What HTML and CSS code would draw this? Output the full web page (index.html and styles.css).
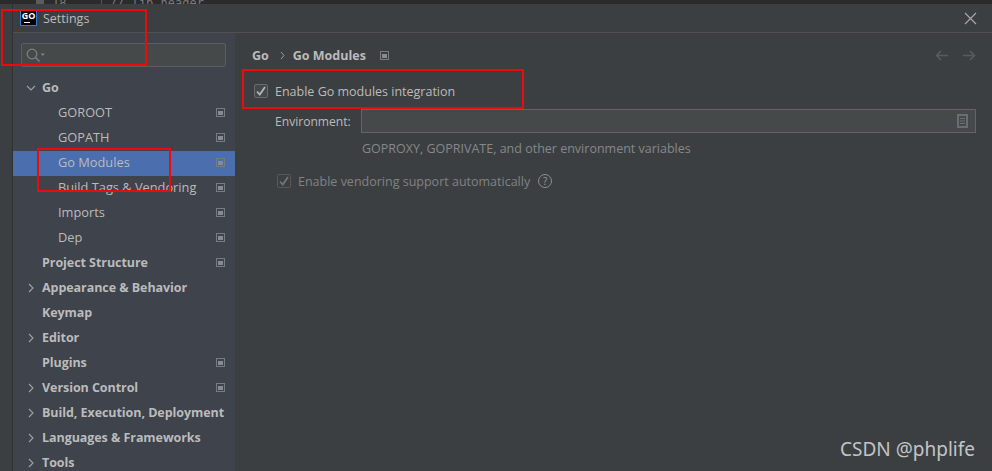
FILE: index.html
```html
<!DOCTYPE html>
<html lang="en">
<head>
    <meta charset="UTF-8">
    <title>Settings</title>
    <link rel="stylesheet" href="styles.css">
</head>
<body>
    <div class="editor-strip"><span class="gutter-mark"></span><span class="editor-line">18</span><span class="editor-code">// lib header</span></div>
    <div class="desktop">
        <div class="left-edge"></div>
        <div class="dialog">
            <header class="titlebar">
                <div class="app-logo"><span>GO</span><i></i></div>
                <span class="title">Settings</span>
                <svg class="close" width="13" height="13" viewBox="0 0 13 13"><path d="M1 1l11 11M12 1L1 12" stroke="#a9abad" stroke-width="1.1" fill="none"/></svg>
            </header>
            <div class="dialog-body">
                <aside class="sidebar">
                    <div class="search">
                        <svg width="22" height="16" viewBox="0 0 22 16"><circle cx="7" cy="7" r="4.8" stroke="#7d8183" stroke-width="1.2" fill="none"/><path d="M10.5 10.5l4 4" stroke="#7d8183" stroke-width="1.4"/><path d="M15.5 6.5h4.5l-2.2 2.6z" fill="#7d8183"/></svg>
                    </div>
                    <ul class="tree">
                        <li class="row group"><svg class="arrow" viewBox="0 0 10 10"><path d="M1 3l4 4 4-4"/></svg><span>Go</span></li>
                        <li class="row child"><span>GOROOT</span><i class="pin"></i></li>
                        <li class="row child"><span>GOPATH</span><i class="pin"></i></li>
                        <li class="row child selected"><span>Go Modules</span><i class="pin"></i></li>
                        <li class="row child"><span>Build Tags &amp; Vendoring</span><i class="pin"></i></li>
                        <li class="row child"><span>Imports</span><i class="pin"></i></li>
                        <li class="row child"><span>Dep</span><i class="pin"></i></li>
                        <li class="row group"><b class="no-arrow"></b><span>Project Structure</span><i class="pin"></i></li>
                        <li class="row group"><svg class="arrow" viewBox="0 0 10 10"><path d="M3 1l4 4-4 4"/></svg><span>Appearance &amp; Behavior</span></li>
                        <li class="row group"><b class="no-arrow"></b><span>Keymap</span></li>
                        <li class="row group"><svg class="arrow" viewBox="0 0 10 10"><path d="M3 1l4 4-4 4"/></svg><span>Editor</span></li>
                        <li class="row group"><b class="no-arrow"></b><span>Plugins</span><i class="pin"></i></li>
                        <li class="row group"><svg class="arrow" viewBox="0 0 10 10"><path d="M3 1l4 4-4 4"/></svg><span>Version Control</span><i class="pin"></i></li>
                        <li class="row group"><svg class="arrow" viewBox="0 0 10 10"><path d="M3 1l4 4-4 4"/></svg><span>Build, Execution, Deployment</span></li>
                        <li class="row group"><svg class="arrow" viewBox="0 0 10 10"><path d="M3 1l4 4-4 4"/></svg><span>Languages &amp; Frameworks</span></li>
                        <li class="row group"><svg class="arrow" viewBox="0 0 10 10"><path d="M3 1l4 4-4 4"/></svg><span>Tools</span></li>
                    </ul>
                </aside>
                <main class="content">
                    <div class="crumbs">
                        <strong>Go</strong>
                        <svg class="crumb-sep" width="5" height="9" viewBox="0 0 5 9"><path d="M1 1l3 3.5L1 8" stroke="#9a9c9e" fill="none"/></svg>
                        <strong>Go Modules</strong>
                        <i class="pin crumb-pin"></i>
                        <div class="nav-arrows">
                            <svg width="14" height="11" viewBox="0 0 14 11"><path d="M13 5.5H2M6 1L1.5 5.5 6 10" stroke="#585b5d" stroke-width="1.6" fill="none"/></svg>
                            <svg width="14" height="11" viewBox="0 0 14 11"><path d="M1 5.5h11M8 1l4.5 4.5L8 10" stroke="#585b5d" stroke-width="1.6" fill="none"/></svg>
                        </div>
                    </div>
                    <label class="check-row">
                        <span class="checkbox"><svg width="10" height="10" viewBox="0 0 10 10"><path d="M1 5.5l2.8 3L9 1" stroke="#b4b6b8" stroke-width="1.8" fill="none"/></svg></span>
                        Enable Go modules integration
                    </label>
                    <div class="env-row">
                        <span class="env-label">Environment:</span>
                        <div class="env-input">
                            <svg width="11" height="14" viewBox="0 0 11 14"><path d="M1 1h9v12H1z" stroke="#6a6e70" stroke-width="2" fill="none"/><path d="M3 4.5h5M3 7h5M3 9.5h5" stroke="#6a6e70"/></svg>
                        </div>
                    </div>
                    <p class="hint">GOPROXY, GOPRIVATE, and other environment variables</p>
                    <label class="check-row vendoring">
                        <span class="checkbox disabled"><svg width="10" height="10" viewBox="0 0 10 10"><path d="M1 5.5l2.8 3L9 1" stroke="#727577" stroke-width="1.8" fill="none"/></svg></span>
                        Enable vendoring support automatically
                        <span class="help">?</span>
                    </label>
                </main>
            </div>
        </div>
    </div>
    <div class="mark mark-title"></div>
    <div class="mark mark-enable"></div>
    <div class="mark mark-modules"></div>
    <div class="watermark">CSDN @phplife</div>
</body>
</html>
```

FILE: styles.css
```css
:root {
    --dialog-bg: #3c3f41;
    --sidebar-bg: #3e434c;
    --line: #515151;
    --text: #bbbbbb;
    --muted: #85888a;
    --selected: #4b6eaf;
    --mark: #ee0a0a;
}

* {
    box-sizing: border-box;
    margin: 0;
    padding: 0;
}

html,
body {
    width: 992px;
    height: 471px;
    overflow: hidden;
}

body {
    font-family: "Open Sans", "Noto Sans", Arial, sans-serif;
    font-size: 12.5px;
    color: var(--text);
    background-color: var(--dialog-bg);
}

.editor-strip {
    height: 4px;
    background-color: #2b2b2b;
    display: flex;
    align-items: flex-end;
    overflow: hidden;
    color: #77797b;
    line-height: 12px;
    white-space: nowrap;
}

.gutter-mark {
    width: 8px;
    height: 4px;
    margin-left: 36px;
    background-color: #5a5c5e;
}

.editor-line {
    margin-left: 8px;
    width: 50px;
    height: 4px;
    line-height: 6px;
    border-right: 1px solid #555;
    font-family: "DejaVu Sans Mono", monospace;
    font-size: 12px;
}

.editor-code {
    margin-left: 8px;
    height: 4px;
    line-height: 6px;
    font-family: "DejaVu Sans Mono", monospace;
    font-size: 12px;
}

.desktop {
    display: flex;
    height: 467px;
}

.left-edge {
    width: 13px;
    background-color: #3c3f41;
    border-right: 1px solid #2f3133;
}

.dialog {
    flex: 1;
    display: flex;
    flex-direction: column;
}

.titlebar {
    height: 29px;
    flex-shrink: 0;
    border-bottom: 1px solid var(--line);
    display: flex;
    align-items: center;
    padding: 0 15px 0 8px;
}

.app-logo {
    width: 15px;
    height: 15px;
    background-color: #000;
    outline: 1px solid #2a7fe0;
    color: #fff;
    font-size: 9px;
    font-weight: 700;
    line-height: 11px;
    text-align: center;
    position: relative;
    margin-top: -2px;
}

.app-logo i {
    position: absolute;
    left: 3px;
    bottom: 2px;
    width: 6px;
    height: 1px;
    background-color: #fff;
}

.title {
    margin-left: 7px;
    flex: 1;
}

.dialog-body {
    flex: 1;
    display: flex;
    min-height: 0;
}

.sidebar {
    width: 222px;
    flex-shrink: 0;
    background-color: var(--sidebar-bg);
    padding-top: 10px;
    overflow: hidden;
}

.search {
    height: 24px;
    margin: 0 9px 0 8px;
    background-color: #45494a;
    border: 1px solid #5b5e60;
    border-radius: 2px;
    display: flex;
    align-items: center;
    padding-left: 3px;
}

.tree {
    list-style: none;
    margin-top: 9px;
}

.row {
    height: 25px;
    display: flex;
    align-items: center;
    padding-right: 10px;
    padding-bottom: 2px;
    white-space: nowrap;
}

.row span {
    flex: 1;
}

.group {
    font-weight: 700;
    letter-spacing: -0.06px;
    padding-left: 14px;
}

.child {
    font-size: 12.8px;
    padding-left: 45px;
}

.child span {
    margin-bottom: 2px;
}

.selected {
    background-color: var(--selected);
}

.arrow {
    width: 10px;
    height: 10px;
    margin-right: 6px;
    margin-left: -1px;
    flex-shrink: 0;
}

.arrow path {
    fill: none;
    stroke: #a0a2a4;
    stroke-width: 1.1;
}

.no-arrow {
    width: 15px;
    flex-shrink: 0;
}

.pin {
    width: 9px;
    height: 9px;
    padding: 2px 1px 1px;
    border: 1px solid #767d82;
    background-color: #858d93;
    background-clip: content-box;
    flex-shrink: 0;
    display: block;
}

.content {
    flex: 1;
    padding: 13px 16px 0 17px;
}

.crumbs {
    display: flex;
    align-items: center;
    height: 18px;
}

.crumbs strong {
    font-weight: 700;
}

.crumb-sep {
    margin: 0 8px 0 11px;
}

.crumb-pin {
    margin-left: 14px;
}

.nav-arrows {
    margin-left: auto;
    display: flex;
    gap: 13px;
}

.check-row {
    display: flex;
    align-items: center;
    height: 20px;
    margin-top: 17px;
    margin-left: 2px;
}

.checkbox {
    width: 14px;
    height: 14px;
    margin-right: 7px;
    border: 1px solid #6b6b6b;
    border-radius: 2px;
    background-color: #43494a;
    display: flex;
    align-items: center;
    justify-content: center;
}

.checkbox.disabled {
    background-color: transparent;
    border-color: #56595b;
}

.env-row {
    display: flex;
    align-items: center;
    margin-top: 8px;
    padding-left: 23px;
}

.env-label {
    width: 86px;
    font-size: 12.1px;
}

.env-input {
    flex: 1;
    height: 24px;
    background-color: #45494a;
    border: 1px solid #646464;
    display: flex;
    align-items: center;
    justify-content: flex-end;
    padding-right: 7px;
}

.hint {
    color: var(--muted);
    margin: 7px 0 0 110px;
    line-height: 18px;
}

.vendoring {
    margin: 13px 0 0 25px;
    color: #808284;
}

.vendoring .help {
    width: 14px;
    height: 14px;
    margin-left: 8px;
    border: 1px solid #8b8d8f;
    border-radius: 50%;
    color: #9a9c9e;
    font-size: 10px;
    line-height: 12px;
    text-align: center;
}

.mark {
    position: absolute;
    border: 2px solid var(--mark);
}

.mark-title {
    left: 1px;
    top: 9px;
    width: 146px;
    height: 57px;
}

.mark-enable {
    left: 242px;
    top: 69px;
    width: 282px;
    height: 40px;
}

.mark-modules {
    left: 37px;
    top: 148px;
    width: 134px;
    height: 44px;
}

.watermark {
    position: absolute;
    left: 840px;
    top: 436px;
    font-family: "Noto Sans", sans-serif;
    font-size: 19px;
    color: #c3c4c5;
    line-height: 26px;
}
```
